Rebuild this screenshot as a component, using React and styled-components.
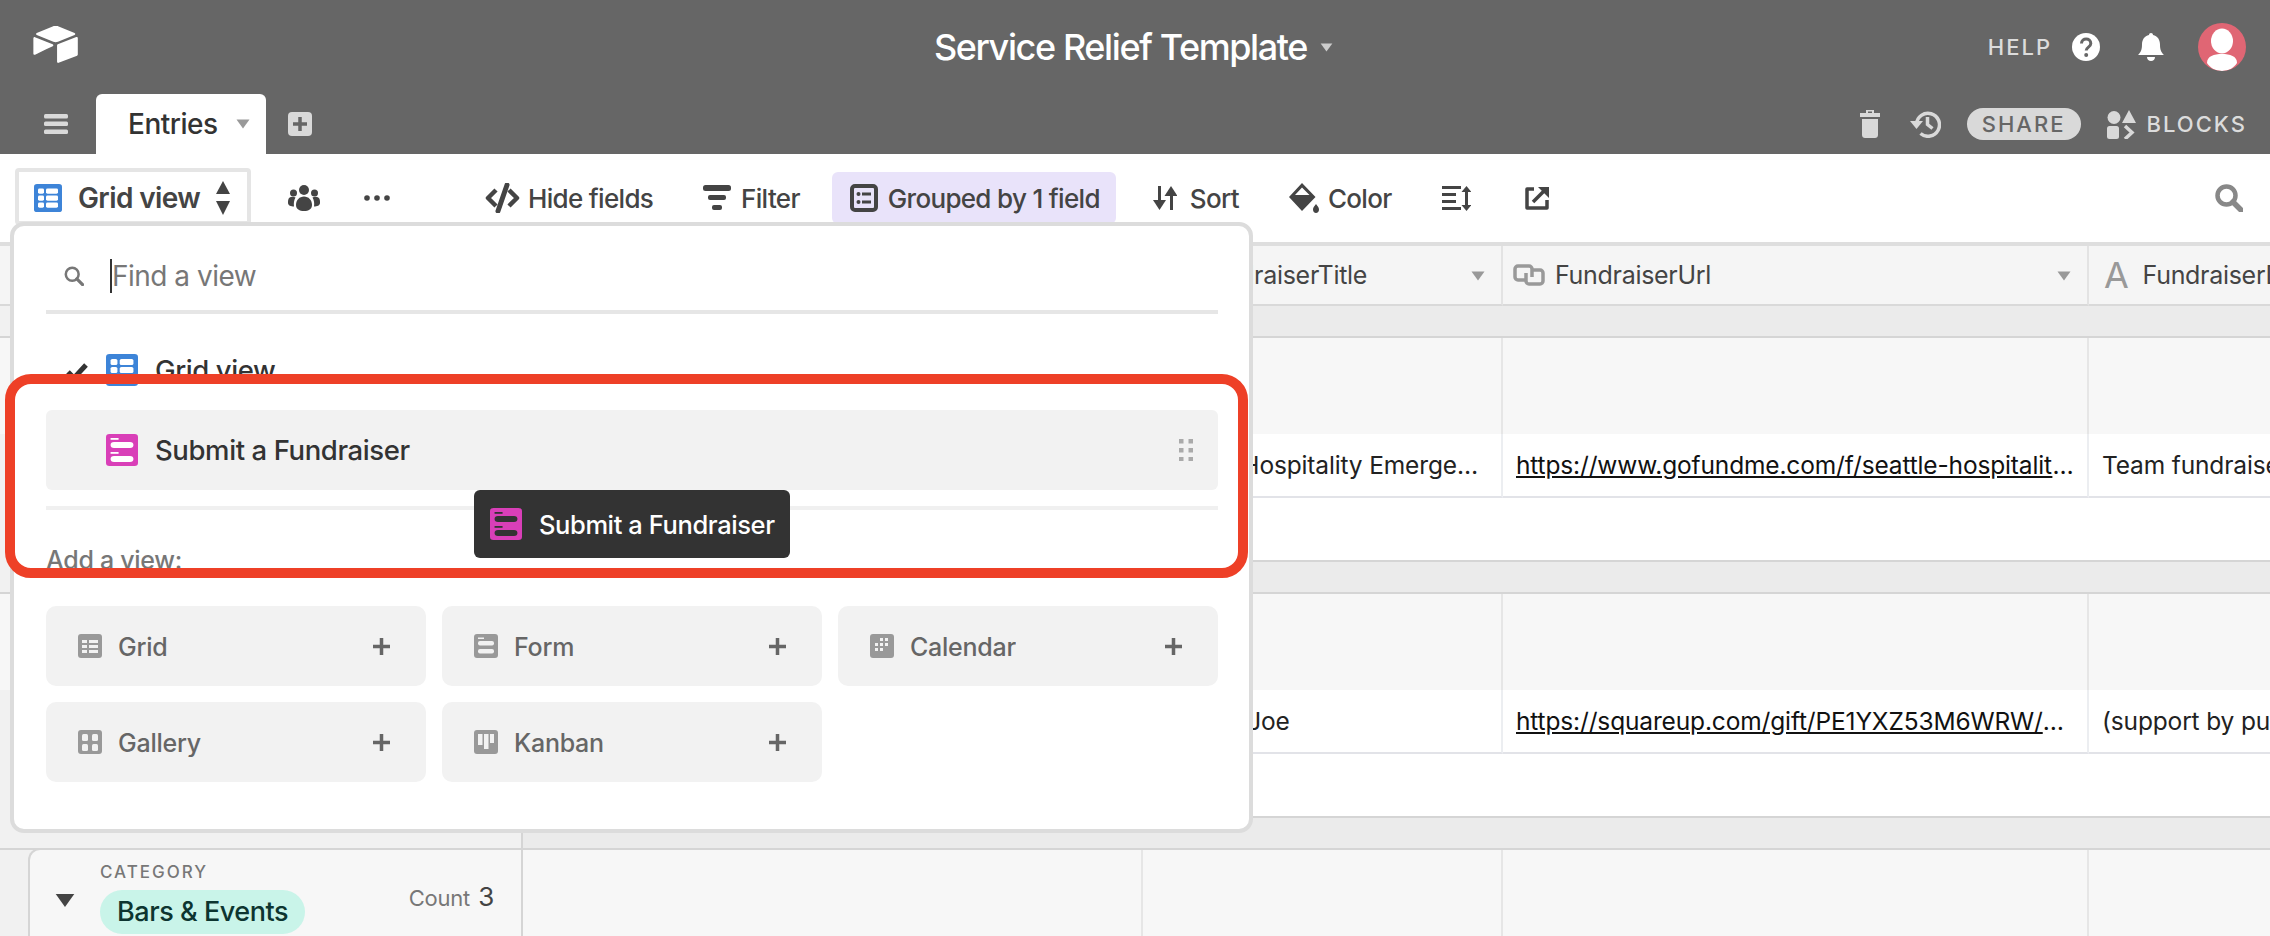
import React from 'react';
import styled, { createGlobalStyle } from 'styled-components';

const Global = createGlobalStyle`
  html, body { margin: 0; padding: 0; background: #fff; }
  * { box-sizing: border-box; }
  body { font-family: Inter, "Noto Sans", "Liberation Sans", sans-serif; color: #333; }
`;

const Page = styled.div`
  position: relative; width: 2270px; height: 936px; overflow: hidden;
  display: flex; flex-direction: column; background: #fff;
`;
const Head = styled.header`background: #666; flex: none;`;
const TopBar = styled.div`
  height: 94px; display: grid; grid-template-columns: 1fr auto 1fr; align-items: center;
  padding: 0 24px 0 33px;
`;
const Title = styled.div`
  display: flex; align-items: center; gap: 13px; font-size: 36px; font-weight: 500; color: #fff;
  letter-spacing: -1.4px; margin-right: 12px;
`;
const TopRight = styled.div`display: flex; align-items: center; justify-content: flex-end; gap: 20px;`;
const Caps = styled.span`
  font-size: 22px; font-weight: 500; letter-spacing: 2px; color: ${p => p.$c || '#dcdcdc'};
`;
const BellSlot = styled.div`display: flex; margin-left: 18px;`;
const Avatar = styled.div`
  width: 48px; height: 48px; border-radius: 50%; background: #e06674; overflow: hidden; margin-left: 14px;
`;
const TabBar = styled.div`height: 60px; display: flex; align-items: flex-end; padding: 0 23px 0 44px;`;
const IconSlot = styled.div`height: 60px; display: flex; align-items: center;`;
const Tab = styled.div`
  width: 170px; height: 60px; margin: 0 22px 0 28px; background: #fff; border-radius: 6px 6px 0 0;
  display: flex; align-items: center; gap: 18px; padding-left: 32px;
  font-size: 28px; font-weight: 500; color: #333; letter-spacing: -0.5px;
`;
const TabRight = styled.div`margin-left: auto; height: 60px; display: flex; align-items: center; gap: 26px;`;
const TrashSlot = styled.div`display: flex; margin-right: 4px;`;
const SharePill = styled.div`
  width: 114px; height: 32px; border-radius: 16px; background: #d9d9d9; display: flex;
  align-items: center; justify-content: center;
`;
const Blocks = styled.div`display: flex; align-items: center; gap: 11px;`;

const Toolbar = styled.div`
  flex: none; height: 92px; border-bottom: 4px solid #dedede; display: flex; align-items: center;
  padding: 0 27px 0 15px; gap: 16px; color: #444; font-size: 26px; font-weight: 500;
`;
const ViewButton = styled.div`
  width: 236px; height: 57px; border: 4px solid #e5e5e5; border-radius: 4px; margin-top: -3px;
  display: flex; align-items: center; padding: 3px 0 0 15px; gap: 16px; font-size: 28px; font-weight: 600; letter-spacing: -0.6px;
  margin-right: 21px;
`;
const ToolIcon = styled.div`display: flex; margin-right: ${p => p.$mr || 0}px;`;
const ToolItem = styled.div`
  height: 52px; display: flex; align-items: center; gap: ${p => p.$gap || 10}px; padding: 0 16px 0 18px; border-radius: 6px;
  background: ${p => (p.$active ? '#e9e3fa' : 'transparent')}; letter-spacing: -0.68px;
  margin-left: ${p => p.$ml || 0}px;
`;
const SearchSlot = styled.div`margin-left: auto; display: flex;`;

const Sheet = styled.div`flex: 1; min-height: 0; display: flex; flex-direction: column; background: #f7f7f7;`;
const Row = styled.div`
  flex: none; display: grid; grid-template-columns: 523px 620px 360px 586px 700px; height: ${p => p.$h}px;
  background: #f1f1f1;
`;
const HeadCell = styled.div`
  background: #f5f5f5; border-bottom: 2px solid #d9d9d9; border-right: 2px solid #e3e3e3; display: flex; align-items: center;
  padding: 0 10px; gap: 10px; font-size: 25px; color: #444; position: relative; white-space: nowrap; overflow: hidden;
  letter-spacing: -0.3px;
`;
const HeadCaret = styled.div`position: absolute; right: 16px; top: 25px; display: flex;`;
const Letter = styled.span`font-size: 36px; color: #999; margin: 0 4px 0 5px; line-height: 1;`;
const GapCell = styled.div`
  background: ${p => (p.$first ? '#f1f1f1' : '#ebebeb')};
  border-right: ${p => (p.$first ? '2px solid #d5d5d5' : 'none')};
  border-bottom: 2px solid #d5d5d5;
  ${p => (p.$wide ? 'grid-column: 2 / -1;' : '')}
`;
const GroupCell = styled.div`background: #f7f7f7; border-right: 2px solid #e6e6e6;`;
const GroupCard = styled.div`
  margin-left: 28px; background: #f7f7f7; border-right: 2px solid #d5d5d5; border-left: 2px solid #d5d5d5;
  border-top-left-radius: 12px; border-top: 2px solid #d5d5d5; margin-top: -2px;
  display: grid; grid-template-columns: 70px 1fr auto; position: relative; padding-right: 27px;
`;
const GroupCaret = styled.div`padding: 42px 0 0 25px;`;
const GroupBody = styled.div`padding-top: 11px;`;
const GroupName = styled.div`font-size: 17px; font-weight: 500; letter-spacing: 2px; color: #777; line-height: 22px;`;
const Pill = styled.div`
  display: inline-block; margin-top: 7px; height: 44px; line-height: 44px; padding: 0 17px; border-radius: 22px;
  background: #c9f4e9; color: #0d3530; font-size: 27px; font-weight: 500; letter-spacing: -0.45px;
`;
const CountBox = styled.div`padding-top: 31px; display: flex; align-items: baseline; gap: 8px; color: #777; font-size: 22px; letter-spacing: -0.2px;`;
const CountNum = styled.span`font-size: 26px; color: #444;`;
const RecordCell = styled.div`
  background: #fff; border-bottom: 2px solid #e2e3e8; border-right: 2px solid #eceef1; display: flex; align-items: center;
  padding: 0 12px 0 13px; font-size: 24.5px; color: #222; min-width: 0; letter-spacing: -0.15px;
  ${p => (p.$first ? 'margin-left: 28px;' : '')}
`;
const Clip = styled.span`display: block; overflow: hidden; text-overflow: ellipsis; white-space: nowrap;`;
const Link = styled(Clip)`text-decoration: underline; color: #111;`;
const AddCell = styled.div`
  background: #fff; border-bottom: 2px solid #d5d5d5;
  ${p => (p.$first ? 'margin-left: 28px; border-right: 2px solid #d5d5d5;' : 'grid-column: 2 / -1;')}
`;

const Panel = styled.div`
  position: absolute; left: 10px; top: 222px; width: 1243px; height: 611px; z-index: 5;
  background: #fff; border: 4px solid #dcdcdc; border-radius: 14px; padding: 0 31px 0 32px;
`;
const SearchRow = styled.div`
  height: 88px; border-bottom: 4px solid #e6e6e6; display: flex; align-items: center; padding: 16px 0 0 18px;
  gap: 26px; font-size: 28px; color: #777; letter-spacing: -0.5px;
`;
const SearchText = styled.span`border-left: 2px solid #333; line-height: 34px;`;
const ViewRow = styled.div`
  height: 80px; display: flex; align-items: center; padding: 0 16px; border-radius: 6px;
  background: ${p => (p.$hover ? '#f2f2f2' : 'transparent')}; font-size: 27.5px; font-weight: 500; color: #333; letter-spacing: -0.4px;
  margin-top: ${p => p.$mt || 0}px;
`;
const CheckSlot = styled.div`width: 44px; display: flex; padding: 4px 0 0 4px;`;
const ViewName = styled.span`margin-left: 17px;`;
const DragDots = styled.div`margin-left: auto; margin-right: 9px; display: flex;`;
const Rule = styled.div`height: 4px; background: #f0f0f0; margin-top: 16px;`;
const AddLabel = styled.div`margin-top: 34px; height: 32px; line-height: 32px; font-size: 25px; font-weight: 500; color: #777; letter-spacing: -0.3px;`;
const AddGrid = styled.div`margin-top: 30px; display: grid; grid-template-columns: repeat(3, 380px); grid-auto-rows: 80px; gap: 16px;`;
const AddButton = styled.div`
  background: #f2f2f2; border-radius: 10px; display: flex; align-items: center; padding: 0 36px 0 32px; gap: 16px;
  font-size: 25px; font-weight: 500; color: #666; letter-spacing: -0.25px;
`;
const AddName = styled.span`display: block; height: 29px; line-height: 31px; overflow: hidden;`;
const PlusSlot = styled.div`margin-left: auto; display: flex;`;

const Tooltip = styled.div`
  position: absolute; left: 474px; top: 490px; width: 316px; height: 68px; z-index: 7; background: #333; border-radius: 6px;
  display: flex; align-items: center; gap: 17px; padding-left: 16px; color: #fff; font-size: 25.5px; font-weight: 500; letter-spacing: -0.4px;
`;
const Frame = styled.div`
  position: absolute; left: 5px; top: 374px; width: 1243px; height: 204px; z-index: 6;
  border: 10px solid #ee4027; border-radius: 26px; pointer-events: none;
`;

const Caret = ({ w = 14, h = 10, c = '#999' }) => (
  <svg width={w} height={h} viewBox="0 0 14 10"><path d="M0.5 0.5h13L7 9.5z" fill={c} /></svg>
);
const Logo = () => (
  <svg width="45" height="38" viewBox="0 0 200 170" fill="#fff">
    <path d="M90 .9 16 31.5c-4.1 1.7-4 7.6.1 9.2l74.4 29.5c6.5 2.6 13.8 2.6 20.4 0l74.4-29.5c4.1-1.6 4.2-7.5.1-9.2L111.5.9c-6.8-2.8-14.6-2.8-21.5 0" />
    <path d="M107 86.5v73.7c0 3.5 3.5 5.9 6.8 4.6l82.9-32.2c1.9-.7 3.1-2.6 3.1-4.6V54.3c0-3.5-3.5-5.9-6.8-4.6L110.1 81.9c-1.9.8-3.1 2.6-3.1 4.6" />
    <path d="M87.6 90.3 63 102.2l-2.5 1.2L8.5 128.3c-3.3 1.6-7.5-.8-7.5-4.5V54.6c0-1.3.7-2.5 1.6-3.3.4-.4.8-.7 1.2-.9 1.2-.7 3-.9 4.4-.3l79.1 31.3c4 1.6 4.3 7.2.3 8.9" />
  </svg>
);
const Question = () => (
  <svg width="28" height="28" viewBox="0 0 28 28">
    <circle cx="14" cy="14" r="14" fill="#fff" />
    <path d="M9.5 10.5c0-6 9.3-6 9.3 0 0 3.6-4.6 3.6-4.6 7" fill="none" stroke="#666" strokeWidth="3" />
    <circle cx="14.2" cy="22" r="2" fill="#666" />
  </svg>
);
const Bell = () => (
  <svg width="26" height="28" viewBox="0 0 26 28" fill="#fff">
    <path d="M13 0c1.2 0 2 .8 2 2 4.600 1 7 4.800 7 9.500 0 5 1 7.500 4 10.500H0c3-3 4-5.500 4-10.500C4 6.800 6.400 3 11 2c0-1.200.8-2 2-2z" />
    <path d="M9 24h8c0 2.500-1.800 4-4 4s-4-1.500-4-4z" />
  </svg>
);
const Person = () => (
  <svg width="48" height="48" viewBox="0 0 48 48" fill="#fff">
    <ellipse cx="24" cy="18" rx="11" ry="12.500" />
    <path d="M9 40c0-7 7-9 15-9s15 2 15 9c-3 5-9 8-15 8s-12-3-15-8z" />
  </svg>
);
const Burger = () => (
  <svg width="24" height="20" viewBox="0 0 24 20" fill="#d9d9d9">
    <rect width="24" height="4.500" rx="1.500" /><rect y="7.500" width="24" height="4.500" rx="1.500" /><rect y="15.500" width="24" height="4.500" rx="1.500" />
  </svg>
);
const PlusBox = () => (
  <svg width="24" height="24" viewBox="0 0 24 24">
    <rect width="24" height="24" rx="4" fill="#d9d9d9" />
    <path d="M12 5v14M5 12h14" stroke="#666" strokeWidth="3.500" />
  </svg>
);
const Trash = () => (
  <svg width="20" height="28" viewBox="0 0 20 28" fill="#d9d9d9">
    <path d="M6 0h8v3h6v4H0V3h6zm2 1.500V3h4V1.500z" fillRule="evenodd" />
    <path d="M2 9h16v16c0 1.700-1.300 3-3 3H5c-1.700 0-3-1.300-3-3z" />
  </svg>
);
const History = () => (
  <svg width="31" height="28" viewBox="0 0 31 28" fill="none" stroke="#d9d9d9">
    <path d="M6.500 14a11.500 11.500 0 1 1 4 9.500" strokeWidth="3.500" />
    <path d="M0 11l6.500 8 6.500-8z" fill="#d9d9d9" stroke="none" />
    <path d="M17.500 7v7.500l5 4" strokeWidth="3.500" />
  </svg>
);
const BlocksIcon = () => (
  <svg width="29" height="29" viewBox="0 0 29 29" fill="#d9d9d9">
    <circle cx="7" cy="7.500" r="6.500" /><path d="M22 0l7 13H15z" />
    <rect x="0" y="16" width="12" height="13" rx="2.500" />
    <path d="M18 16l7 6.500-7 6.500" fill="none" stroke="#d9d9d9" strokeWidth="3.500" />
  </svg>
);
const ViewCells = ({ size, h, bg, fg, kind }) => (
  <svg width={size} height={h} viewBox="0 0 28 32" preserveAspectRatio="none">
    <rect width="28" height="32" rx="3" fill={bg} />
    {kind === 'grid' && (
      <g fill={fg}>
        <rect x="4" y="5" width="6" height="6" rx="1.500" /><rect x="12" y="5" width="12" height="6" rx="1.500" />
        <rect x="4" y="13" width="6" height="6" rx="1.500" /><rect x="12" y="13" width="12" height="6" rx="1.500" />
        <rect x="4" y="21" width="6" height="6" rx="1.500" /><rect x="12" y="21" width="12" height="6" rx="1.500" />
      </g>
    )}
    {kind === 'form' && (
      <g fill={fg}>
        <rect x="4" y="4" width="7" height="1.800" /><rect x="4" y="8" width="20" height="6" rx="3" />
        <rect x="4" y="18" width="7" height="1.800" /><rect x="4" y="22" width="20" height="6" rx="3" />
      </g>
    )}
  </svg>
);
const MiniIcon = ({ kind }) => (
  <svg width="24" height="24" viewBox="0 0 24 24">
    <rect width="24" height="24" rx="3" fill="#999" />
    <g fill="#f2f2f2">
      {kind === 'Grid' && (<><rect x="4" y="6" width="5" height="3" /><rect x="11" y="6" width="9" height="3" /><rect x="4" y="11" width="5" height="3" /><rect x="11" y="11" width="9" height="3" /><rect x="4" y="16" width="5" height="3" /><rect x="11" y="16" width="9" height="3" /></>)}
      {kind === 'Form' && (<><rect x="4" y="3.500" width="6" height="1.500" /><rect x="4" y="7" width="16" height="4.500" rx="2" /><rect x="4" y="15" width="16" height="4.500" rx="2" /></>)}
      {kind === 'Calendar' && (<><rect x="10" y="4" width="3" height="3" /><rect x="15" y="4" width="3" height="3" /><rect x="5" y="9" width="3" height="3" /><rect x="10" y="9" width="3" height="3" /><rect x="15" y="9" width="3" height="3" /><rect x="5" y="14" width="3" height="3" /><rect x="10" y="14" width="3" height="3" /></>)}
      {kind === 'Gallery' && (<><rect x="4" y="4" width="6" height="7" rx="1.500" /><rect x="14" y="4" width="6" height="7" rx="1.500" /><rect x="4" y="14" width="6" height="7" rx="1.500" /><rect x="14" y="14" width="6" height="7" rx="1.500" /></>)}
      {kind === 'Kanban' && (<><rect x="4" y="4" width="4.500" height="11" /><rect x="10" y="4" width="4.500" height="15" /><rect x="16" y="4" width="4" height="9" /></>)}
    </g>
  </svg>
);
const UpDown = () => (
  <svg width="14" height="34" viewBox="0 0 14 34" fill="#444"><path d="M7 0l7 13H0z" /><path d="M7 34l7-14H0z" /></svg>
);
const People = () => (
  <svg width="32" height="26" viewBox="0 0 32 26" fill="#444">
    <circle cx="16" cy="5" r="5" /><circle cx="5.500" cy="8" r="3.500" /><circle cx="26.500" cy="8" r="3.500" />
    <path d="M8 20c0-5 3.500-8.500 8-8.500s8 3.500 8 8.500c0 4-3.500 6-8 6s-8-2-8-6z" />
    <path d="M1 13c2-1.500 4.500-1.500 6.500-.5C6 15 5.500 18 6 21.500c-3 0-6-1-6-3.500 0-2 0-3.500 1-5z" />
    <path d="M31 13c-2-1.500-4.500-1.500-6.500-.5 1.500 2.500 2 5.500 1.500 9 3 0 6-1 6-3.500 0-2 0-3.500-1-5z" />
  </svg>
);
const Dots = () => (
  <svg width="26" height="6" viewBox="0 0 26 6" fill="#444"><circle cx="3" cy="3" r="2.800" /><circle cx="13" cy="3" r="2.800" /><circle cx="23" cy="3" r="2.800" /></svg>
);
const HideIcon = () => (
  <svg width="35" height="30" viewBox="0 0 35 30" fill="none" stroke="#444" strokeWidth="4.500">
    <path d="M11 7L3 15l8 8" strokeLinejoin="round" /><path d="M24 7l8 8-8 8" strokeLinejoin="round" />
    <path d="M22 2L13 28" strokeWidth="5" strokeLinecap="round" />
  </svg>
);
const FilterIcon = () => (
  <svg width="28" height="26" viewBox="0 0 28 26" fill="#444">
    <rect width="28" height="6" rx="2.500" /><rect x="5" y="10" width="18" height="5" rx="2" /><rect x="9" y="20" width="10" height="5" rx="2" />
  </svg>
);
const GroupIcon = () => (
  <svg width="28" height="28" viewBox="0 0 28 28">
    <rect x="2" y="2" width="24" height="24" rx="3" fill="none" stroke="#444" strokeWidth="4" />
    <g fill="#444"><circle cx="8.500" cy="10" r="2" /><rect x="12" y="8.500" width="9" height="3" /><circle cx="8.500" cy="18" r="2" /><rect x="12" y="16.500" width="9" height="3" /></g>
  </svg>
);
const SortIcon = () => (
  <svg width="24" height="24" viewBox="0 0 24 24" fill="#444">
    <rect x="5" y="0" width="3" height="18" /><path d="M0 14h13l-6.500 10z" />
    <rect x="17" y="6" width="3" height="18" /><path d="M11.500 10h13L18 0z" />
  </svg>
);
const ColorIcon = () => (
  <svg width="30" height="30" viewBox="0 0 30 30" fill="#444">
    <path d="M13 0l13.500 14L13 28 0 14z M6 12h14.500L13 4.500z" fillRule="evenodd" />
    <path d="M27 21c1.500 2 3 3.500 3 5.500s-1.300 3.500-3 3.500-3-1.500-3-3.500 1.500-3.500 3-5.500z" />
  </svg>
);
const RowsIcon = () => (
  <svg width="29" height="25" viewBox="0 0 29 25" fill="#444">
    <rect width="19" height="3" /><rect y="7" width="14" height="3" /><rect y="14" width="14" height="3" /><rect y="21" width="19" height="3" />
    <rect x="23" y="3" width="3" height="18" /><path d="M19.500 6l5-6 5 6z" /><path d="M19.500 19l5 6 5-6z" />
  </svg>
);
const ShareOut = () => (
  <svg width="24" height="24" viewBox="0 0 24 24" fill="none" stroke="#444" strokeWidth="3.500">
    <path d="M9 3H2v19h20v-8" strokeLinejoin="round" />
    <path d="M8 16L20 4" /><path d="M13 1h11v11z" fill="#444" stroke="none" />
  </svg>
);
const Magnifier = ({ s = 28, c = '#888', w = 4.500 }) => (
  <svg width={s} height={s} viewBox="0 0 28 28" fill="none" stroke={c} strokeWidth={w}>
    <circle cx="11.500" cy="11.500" r="9" /><path d="M18 18l8 8" strokeWidth={w + 1} strokeLinecap="round" />
  </svg>
);
const LinkIcon = () => (
  <svg width="32" height="22" viewBox="0 0 32 22" fill="none" stroke="#999" strokeWidth="3.500">
    <path d="M12 16H5c-1.700 0-3-1.300-3-3V5c0-1.700 1.300-3 3-3h11c1.700 0 3 1.300 3 3v8" />
    <path d="M20 6h7c1.700 0 3 1.300 3 3v8c0 1.700-1.300 3-3 3H16c-1.700 0-3-1.300-3-3V9" />
  </svg>
);
const Check = () => (
  <svg width="22" height="18" viewBox="0 0 22 18" fill="none" stroke="#333" strokeWidth="5"><path d="M2 9l6 6L20 2" /></svg>
);
const Grip = () => (
  <svg width="14" height="22" viewBox="0 0 14 22" fill="#aaa">
    {[0, 9, 18].map(y => (<g key={y}><rect x="0" y={y} width="4.500" height="4.500" /><rect x="9.500" y={y} width="4.500" height="4.500" /></g>))}
  </svg>
);
const Plus = () => (
  <svg width="17" height="17" viewBox="0 0 17 17"><path d="M8.500 0v17M0 8.500h17" stroke="#666" strokeWidth="3.500" /></svg>
);

const tools = [
  { label: 'Hide fields', icon: <HideIcon />, gap: 8 },
  { label: 'Filter', icon: <FilterIcon /> },
  { label: 'Grouped by 1 field', icon: <GroupIcon />, active: true },
  { label: 'Sort', icon: <SortIcon />, gap: 13, ml: 3 },
  { label: 'Color', icon: <ColorIcon />, gap: 9 },
];
const addViews = ['Grid', 'Form', 'Calendar', 'Gallery', 'Kanban'];

const Gap = () => (<Row $h={32}><GapCell $first /><GapCell $wide /></Row>);
const GroupRow = ({ h = 96 }) => (
  <Row $h={h}>
    <GroupCell /><GroupCell /><GroupCell /><GroupCell /><GroupCell />
  </Row>
);
const RecordRow = ({ title, url, desc }) => (
  <Row $h={64}>
    <RecordCell $first />
    <RecordCell />
    <RecordCell><Clip>{title}</Clip></RecordCell>
    <RecordCell><Link>{url}</Link></RecordCell>
    <RecordCell><Clip>{desc}</Clip></RecordCell>
  </Row>
);
const AddRow = () => (<Row $h={64}><AddCell $first /><AddCell /></Row>);

export default function App() {
  return (
    <Page>
      <Global />
      <Head>
        <TopBar>
          <div><Logo /></div>
          <Title>Service Relief Template <Caret w={13} h={9} c="#ccc" /></Title>
          <TopRight>
            <Caps>HELP</Caps>
            <Question />
            <BellSlot><Bell /></BellSlot>
            <Avatar><Person /></Avatar>
          </TopRight>
        </TopBar>
        <TabBar>
          <IconSlot><Burger /></IconSlot>
          <Tab>Entries <Caret /></Tab>
          <IconSlot><PlusBox /></IconSlot>
          <TabRight>
            <TrashSlot><Trash /></TrashSlot>
            <History />
            <SharePill><Caps $c="#666">SHARE</Caps></SharePill>
            <Blocks><BlocksIcon /><Caps>BLOCKS</Caps></Blocks>
          </TabRight>
        </TabBar>
      </Head>
      <Toolbar>
        <ViewButton>
          <ViewCells size={28} h={28} bg="#3d84d8" fg="#fff" kind="grid" />
          Grid view
          <UpDown />
        </ViewButton>
        <ToolIcon $mr={28}><People /></ToolIcon>
        <ToolIcon $mr={61}><Dots /></ToolIcon>
        {tools.map(t => (
          <ToolItem key={t.label} $active={t.active} $gap={t.gap} $ml={t.ml}>{t.icon}{t.label}</ToolItem>
        ))}
        <ToolItem><RowsIcon /></ToolItem>
        <ToolItem $ml={4}><ShareOut /></ToolItem>
        <SearchSlot><Magnifier /></SearchSlot>
      </Toolbar>
      <Sheet>
        <Row $h={60}>
          <HeadCell />
          <HeadCell />
          <HeadCell><Letter>A</Letter>FundraiserTitle<HeadCaret><Caret /></HeadCaret></HeadCell>
          <HeadCell><LinkIcon />FundraiserUrl<HeadCaret><Caret /></HeadCaret></HeadCell>
          <HeadCell><Letter>A</Letter>FundraiserDescription</HeadCell>
        </Row>
        <Gap />
        <GroupRow />
        <RecordRow title="Seattle Hospitality Emergency Fund" url="https://www.gofundme.com/f/seattle-hospitality-emergency-fund" desc="Team fundraiser for hospitality workers" />
        <AddRow />
        <Gap />
        <GroupRow />
        <RecordRow title="Brother Joe" url="https://squareup.com/gift/PE1YXZ53M6WRW/order-and-send-gift" desc="(support by purchasing a gift card)" />
        <AddRow />
        <Gap />
        <Row $h={86}>
          <GroupCard>
            <GroupCaret><Caret w={20} h={15} c="#444" /></GroupCaret>
            <GroupBody>
              <GroupName>CATEGORY</GroupName>
              <Pill>Bars &amp; Events</Pill>
            </GroupBody>
            <CountBox>Count <CountNum>3</CountNum></CountBox>
          </GroupCard>
          <GroupCell /><GroupCell /><GroupCell /><GroupCell />
        </Row>
      </Sheet>

      <Panel>
        <SearchRow>
          <Magnifier s={20} c="#777" w={3.500} />
          <SearchText>Find a view</SearchText>
        </SearchRow>
        <ViewRow $mt={16}>
          <CheckSlot><Check /></CheckSlot>
          <ViewCells size={32} h={32} bg="#3d84d8" fg="#fff" kind="grid" />
          <ViewName>Grid view</ViewName>
        </ViewRow>
        <ViewRow $hover>
          <CheckSlot />
          <ViewCells size={32} h={32} bg="#d93fb8" fg="#fff" kind="form" />
          <ViewName>Submit a Fundraiser</ViewName>
          <DragDots><Grip /></DragDots>
        </ViewRow>
        <Rule />
        <AddLabel>Add a view:</AddLabel>
        <AddGrid>
          {addViews.map(v => (
            <AddButton key={v}><MiniIcon kind={v} /><AddName>{v}</AddName><PlusSlot><Plus /></PlusSlot></AddButton>
          ))}
        </AddGrid>
      </Panel>
      <Frame />
      <Tooltip>
        <ViewCells size={32} h={32} bg="#d93fb8" fg="#333" kind="form" />
        Submit a Fundraiser
      </Tooltip>
    </Page>
  );
}
